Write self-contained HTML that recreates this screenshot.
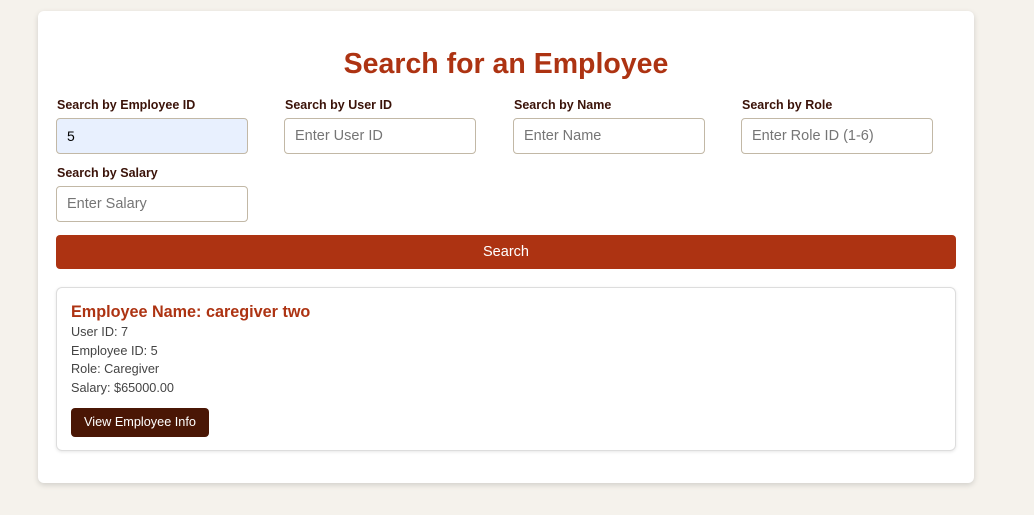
<!DOCTYPE html>
<html><head><style>
body{margin:0;background:#f5f2ec;font-family:"Liberation Sans",Arial,sans-serif;width:1034px;height:515px;overflow:hidden;position:relative}
.card{position:absolute;left:38px;top:11px;width:936px;height:472px;background:#fff;border-radius:6px;box-shadow:0 2px 6px rgba(0,0,0,.15)}
h1{position:absolute;margin:0;text-align:center;color:#ad3312;font-size:28.5px;font-weight:bold;line-height:34px}
.lbl{position:absolute;font-size:12.5px;font-weight:bold;color:#3a1208}
.in{position:absolute;width:192px;height:36px;border:1px solid #c2b8a6;border-radius:4px;box-sizing:border-box;font-size:14.5px;color:#757575;padding-left:10px;line-height:35px;background:#fff}
.btn{position:absolute;left:56px;top:235px;width:900px;height:34px;background:#ad3312;border-radius:4px;color:#fff;font-size:14.5px;text-align:center;line-height:35px}
.res{position:absolute;left:56px;top:287px;width:900px;height:164px;box-sizing:border-box;border:1px solid #ddd;border-radius:6px;box-shadow:0 1px 3px rgba(0,0,0,.1)}
.res h2{position:absolute;left:14px;top:15px;margin:0;font-size:16.2px;color:#ad3312;font-weight:bold}
.ln{position:absolute;left:14px;font-size:12.7px;color:#444}
.vb{position:absolute;left:14px;top:120px;width:138px;height:29px;background:#4a1605;border-radius:4px;color:#fff;font-size:12.7px;text-align:center;line-height:29px}
</style></head><body>
<div class="card"></div>
<h1 style="top:47px;left:38px;width:936px">Search for an Employee</h1>
<div class="lbl" style="left:57px;top:98px">Search by Employee ID</div>
<div class="lbl" style="left:285px;top:98px">Search by User ID</div>
<div class="lbl" style="left:514px;top:98px">Search by Name</div>
<div class="lbl" style="left:742px;top:98px">Search by Role</div>
<div class="in" style="left:56px;top:118px;background:#e8f0fe;color:#000;font-size:14px">5</div>
<div class="in" style="left:284px;top:118px">Enter User ID</div>
<div class="in" style="left:513px;top:118px">Enter Name</div>
<div class="in" style="left:741px;top:118px">Enter Role ID (1-6)</div>
<div class="lbl" style="left:57px;top:166px">Search by Salary</div>
<div class="in" style="left:56px;top:186px">Enter Salary</div>
<div class="btn">Search</div>
<div class="res">
<h2>Employee Name: caregiver two</h2>
<div class="ln" style="top:37px">User ID: 7</div>
<div class="ln" style="top:56px">Employee ID: 5</div>
<div class="ln" style="top:74px">Role: Caregiver</div>
<div class="ln" style="top:93px">Salary: $65000.00</div>
<div class="vb">View Employee Info</div>
</div>
</body></html>
